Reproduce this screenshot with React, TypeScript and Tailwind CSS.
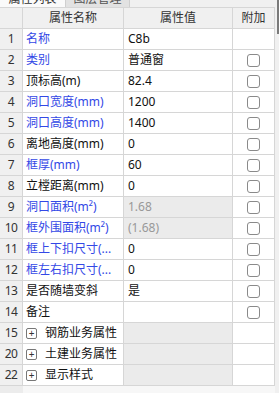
import React from 'react';

type Row = {
  no: number;
  name: string;
  value?: string;
  blue?: boolean;
  readonly?: boolean;
  check?: boolean;
  group?: boolean;
};

const ROWS: Row[] = [
  { no: 1, name: '名称', value: 'C8b', blue: true },
  { no: 2, name: '类别', value: '普通窗', blue: true, check: true },
  { no: 3, name: '顶标高(m)', value: '82.4', check: true },
  { no: 4, name: '洞口宽度(mm)', value: '1200', blue: true, check: true },
  { no: 5, name: '洞口高度(mm)', value: '1400', blue: true, check: true },
  { no: 6, name: '离地高度(mm)', value: '0', check: true },
  { no: 7, name: '框厚(mm)', value: '60', blue: true, check: true },
  { no: 8, name: '立樘距离(mm)', value: '0', check: true },
  { no: 9, name: '洞口面积(m²)', value: '1.68', blue: true, readonly: true, check: true },
  { no: 10, name: '框外围面积(m²)', value: '(1.68)', blue: true, readonly: true, check: true },
  { no: 11, name: '框上下扣尺寸(...', value: '0', blue: true, check: true },
  { no: 12, name: '框左右扣尺寸(...', value: '0', blue: true, check: true },
  { no: 13, name: '是否随墙变斜', value: '是', check: true },
  { no: 14, name: '备注', value: '', check: true },
  { no: 15, name: '钢筋业务属性', group: true },
  { no: 20, name: '土建业务属性', group: true },
  { no: 22, name: '显示样式', group: true },
];

const font = { fontFamily: '"Noto Sans", "Noto Sans CJK SC", sans-serif' };

export default function App() {
  return (
    <div className="w-[279px] h-[393px] bg-[#f0f0f0] overflow-hidden flex text-[12px] text-[#111]" style={font}>
      <div className="w-[275px] flex flex-col">
        {/* tab strip, mostly scrolled out of view */}
        <div className="h-[8px] flex overflow-hidden border-b border-[#d6d6d6] bg-[#f0f0f0]">
          <div className="w-[66px] bg-[#fafafa] border-r border-[#cfcfcf] text-center leading-[14px] mt-[-8px] pt-0 text-[#333]">
            属性列表
          </div>
          <div className="w-[64px] bg-[#e2e2e2] border-r border-[#cfcfcf] text-center leading-[14px] mt-[-8px] text-[#555]">
            图层管理
          </div>
        </div>

        {/* header */}
        <div className="grid grid-cols-[23px_101px_109px_42px] h-[21px] bg-[#f0f0f0] text-[#333]">
          <div className="border-r border-b border-[#d6d6d6]" />
          <div className="border-r border-b border-[#d6d6d6] flex items-center justify-center">属性名称</div>
          <div className="border-r border-b border-[#d6d6d6] flex items-center justify-center">属性值</div>
          <div className="border-r border-b border-[#d6d6d6] flex items-center justify-center">附加</div>
        </div>

        {ROWS.map((r) => (
          <div key={r.no} className="grid grid-cols-[23px_101px_109px_42px] h-[21px]">
            <div className="bg-[#f0f0f0] border-r border-b border-[#d6d6d6] flex items-center justify-center text-[#333] tracking-[-0.5px]">
              {r.no}
            </div>
            <div
              className={`bg-white border-r border-b border-[#d6d6d6] flex items-center pl-[3px] whitespace-nowrap overflow-hidden ${
                r.blue ? 'text-[#3348e6]' : 'text-[#111]'
              }`}
            >
              {r.group && (
                <span className="w-[11px] h-[11px] border border-[#777] rounded-[2px] flex items-center justify-center text-[10px] leading-none text-[#333] mr-[8px] shrink-0">
                  +
                </span>
              )}
              {r.name}
            </div>
            <div
              className={`border-r border-b border-[#d6d6d6] flex items-center pl-[4px] whitespace-nowrap ${
                r.readonly || r.group ? 'bg-[#ebebeb] text-[#999]' : 'bg-white text-[#111]'
              }`}
            >
              {r.value}
            </div>
            <div className="bg-white border-r border-b border-[#d6d6d6] flex items-center justify-center">
              {r.check && <span className="w-[13px] h-[13px] border border-[#8a8a8a] rounded-[3px] bg-white" />}
            </div>
          </div>
        ))}

        <div className="flex-1 flex">
          <div className="w-[23px] bg-[#ececec]" />
          <div className="flex-1 bg-[#f7f7f7]" />
        </div>
      </div>
      {/* scrollbar */}
      <div className="w-[4px] bg-[#f0f0f0] flex justify-end">
        <div className="w-[2px] h-[34px] bg-[#7a7a7a]" />
      </div>
    </div>
  );
}
